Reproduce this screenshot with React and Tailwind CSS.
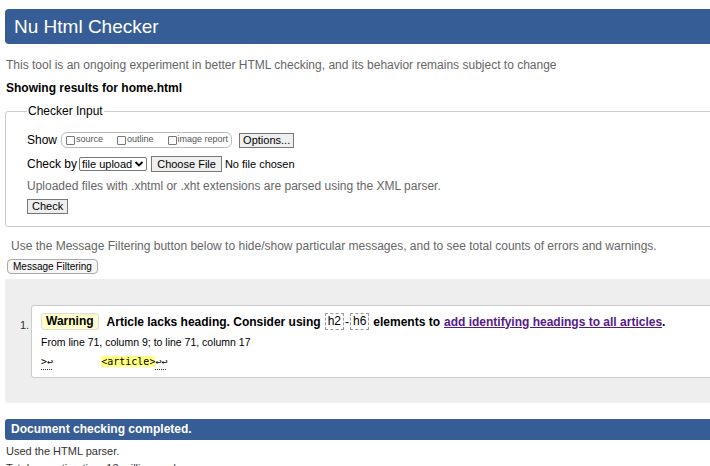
export default function App() {
  const font = { fontFamily: '"Liberation Sans", Arial, sans-serif' };
  return (
    <div className="w-[710px] h-[466px] overflow-hidden bg-white text-black" style={font}>
      <div className="w-[760px]">
        <div className="pt-[9px] pl-[5px]">
          <h1 className="h-[35px] bg-[#365d95] rounded-l-[4px] text-white text-[19px] leading-[35px] pl-[9px]">
            Nu Html Checker
          </h1>
        </div>

        <p className="mt-[14px] ml-[6px] text-[12px] leading-[14px] text-[#666]">
          This tool is an ongoing experiment in better HTML checking, and its behavior remains subject to change
        </p>
        <p className="mt-[9px] ml-[6px] text-[12px] leading-[14px] font-bold">Showing results for home.html</p>

        <fieldset className="mt-[9px] ml-[5px] border border-[#ccc] rounded-l-[3px] pl-[21px] pb-[12px]">
          <legend className="text-[12px] leading-[15px] px-[1px]">Checker Input</legend>

          <div className="flex items-center h-[16px] mt-[13px]">
            <span className="text-[12px] mr-[4px]">Show</span>
            <div className="flex items-center h-[16px] border border-[#bbb] rounded-[6px] pl-[4px] pr-[3px] text-[9px] text-[#555]">
              <span className="w-[9px] h-[9px] border border-[#777] rounded-[1px] mr-[1px]" />
              <span className="mr-[14px]">source</span>
              <span className="w-[9px] h-[9px] border border-[#777] rounded-[1px] mr-[1px]" />
              <span className="mr-[14px]">outline</span>
              <span className="w-[9px] h-[9px] border border-[#777] rounded-[1px] mr-[1px]" />
              <span>image report</span>
            </div>
            <button className="ml-[7px] h-[15px] px-[3px] border border-[#777] bg-[#efefef] text-[11px] leading-[13px]">
              Options...
            </button>
          </div>

          <div className="flex items-center h-[16px] mt-[8px]">
            <span className="text-[12px] mr-[2px]">Check by</span>
            <div className="flex items-center h-[14px] border border-[#777] rounded-[2px] pl-[2px] pr-[2px] text-[11px] leading-[12px]">
              <span>file upload</span>
              <svg width="10" height="8" viewBox="0 0 10 8" className="ml-[2px]">
                <path d="M1.5 2 L5 5.5 L8.5 2" fill="none" stroke="#000" strokeWidth="1.8" />
              </svg>
            </div>
            <button className="ml-[4px] h-[16px] px-[5px] border border-[#777] bg-[#efefef] text-[11px] leading-[13px]">
              Choose File
            </button>
            <span className="ml-[3px] text-[11px]">No file chosen</span>
          </div>

          <p className="mt-[7px] text-[12px] leading-[14px] text-[#666]">
            Uploaded files with .xhtml or .xht extensions are parsed using the XML parser.
          </p>

          <button className="mt-[6px] h-[15px] px-[4px] border border-[#777] bg-[#efefef] text-[11px] leading-[13px] block">
            Check
          </button>
        </fieldset>

        <p className="mt-[12px] ml-[11px] text-[12px] leading-[14px] text-[#666]">
          Use the Message Filtering button below to hide/show particular messages, and to see total counts of errors and warnings.
        </p>
        <button className="mt-[6px] ml-[7px] h-[15px] px-[5px] border border-[#aaa] rounded-[4px] bg-[#f7f7f7] text-[10px] leading-[12px] block">
          Message Filtering
        </button>

        <div className="mt-[5px] ml-[5px] h-[124px] bg-[#eee] rounded-bl-[3px] pt-[26px] pl-[26px]">
          <div className="flex bg-white border border-[#ccc] rounded-l-[3px] h-[73px]">
            <span className="w-[0px] relative">
              <span className="absolute -left-[12px] top-[11px] text-[11px] text-[#333]">1.</span>
            </span>
            <div className="pl-[9px] pt-[7px]">
              <div className="flex items-center h-[17px] text-[12px] font-bold whitespace-nowrap">
                <span className="h-[17px] px-[4px] leading-[15px] bg-[#ffffcc] border border-[#ddd] rounded-[3px] mr-[8px]">
                  Warning
                </span>
                <span>Article lacks heading. Consider using</span>
                <code className="ml-[4px] px-[2px] border border-dashed border-[#999] font-normal text-[12px] leading-[15px]" style={font}>
                  h2
                </code>
                <span className="mx-[1px] font-normal">-</span>
                <code className="px-[2px] border border-dashed border-[#999] font-normal text-[12px] leading-[15px]" style={font}>
                  h6
                </code>
                <span className="ml-[4px]">elements to</span>
                <a className="ml-[4px] text-[#551a8b] underline">add identifying headings to all articles</a>
                <span>.</span>
              </div>
              <p className="mt-[6px] text-[10.5px] leading-[13px]">From line 71, column 9; to line 71, column 17</p>
              <p className="mt-[6px] text-[10px] leading-[13px] whitespace-pre" style={{ fontFamily: '"DejaVu Sans Mono", monospace' }}>
                <span className="underline decoration-dotted underline-offset-[4px] decoration-[#333]">{">↩"}</span>
                {"        "}
                <span className="bg-[#ffff80]">{"<article>"}</span>
                <span className="underline decoration-dotted underline-offset-[4px] decoration-[#333]">{"↩↩"}</span>
              </p>
            </div>
          </div>
        </div>

        <div className="mt-[16px] ml-[5px] h-[21px] bg-[#365d95] rounded-l-[3px] text-white text-[12px] font-bold leading-[21px] pl-[6px]">
          Document checking completed.
        </div>
        <p className="mt-[5px] ml-[6px] text-[11px] leading-[13px] text-[#333]">Used the HTML parser.</p>
        <p className="mt-[4px] ml-[6px] text-[11px] leading-[13px] text-[#333]">Total execution time 13 milliseconds.</p>
      </div>
    </div>
  );
}
